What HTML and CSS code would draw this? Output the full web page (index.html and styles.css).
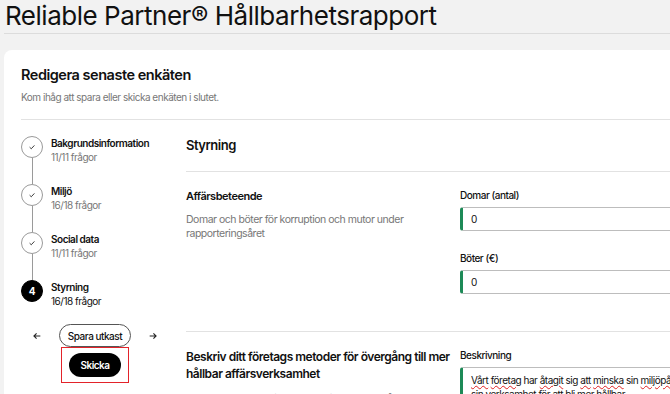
FILE: index.html
```html
<!DOCTYPE html>
<html lang="sv">
<head>
<meta charset="utf-8">
<title>Reliable Partner® Hållbarhetsrapport</title>
<link rel="stylesheet" href="styles.css">
</head>
<body>
<header class="page-header">
  <h1 class="page-title">Reliable Partner® Hållbarhetsrapport</h1>
</header>
<main class="card">
  <div class="card-head">
    <h2 class="card-title">Redigera senaste enkäten</h2>
    <p class="card-sub">Kom ihåg att spara eller skicka enkäten i slutet.</p>
  </div>
  <div class="card-body">
    <aside class="side">
      <ol class="steps">
        <li class="step done">
          <span class="step-dot"><svg viewBox="0 0 10 10" width="8" height="8"><path d="M2 5.2 L4.1 7.2 L8 3" fill="none" stroke="#222" stroke-width="1.1"/></svg></span>
          <div class="step-text"><span class="step-name">Bakgrundsinformation</span><span class="step-count">11/11 frågor</span></div>
        </li>
        <li class="step done">
          <span class="step-dot"><svg viewBox="0 0 10 10" width="8" height="8"><path d="M2 5.2 L4.1 7.2 L8 3" fill="none" stroke="#222" stroke-width="1.1"/></svg></span>
          <div class="step-text"><span class="step-name">Miljö</span><span class="step-count">16/18 frågor</span></div>
        </li>
        <li class="step done">
          <span class="step-dot"><svg viewBox="0 0 10 10" width="8" height="8"><path d="M2 5.2 L4.1 7.2 L8 3" fill="none" stroke="#222" stroke-width="1.1"/></svg></span>
          <div class="step-text"><span class="step-name">Social data</span><span class="step-count">11/11 frågor</span></div>
        </li>
        <li class="step current">
          <span class="step-dot">4</span>
          <div class="step-text"><span class="step-name">Styrning</span><span class="step-count dark">16/18 frågor</span></div>
        </li>
      </ol>
      <div class="nav-row">
        <button class="arrow" aria-label="Föregående"><svg viewBox="0 0 12 12" width="10" height="10"><path d="M10 6 H2.5 M5.5 2.8 L2.3 6 L5.5 9.2" fill="none" stroke="#222" stroke-width="1.3"/></svg></button>
        <button class="btn-outline">Spara utkast</button>
        <button class="arrow" aria-label="Nästa"><svg viewBox="0 0 12 12" width="10" height="10"><path d="M2 6 H9.5 M6.5 2.8 L9.7 6 L6.5 9.2" fill="none" stroke="#222" stroke-width="1.3"/></svg></button>
      </div>
      <div class="highlight">
        <button class="btn-solid">Skicka</button>
      </div>
    </aside>
    <section class="content">
      <h3 class="section-title">Styrning</h3>
      <div class="q-row">
        <div class="q-info">
          <h4 class="q-title">Affärsbeteende</h4>
          <p class="q-desc">Domar och böter för korruption och mutor under rapporteringsåret</p>
        </div>
        <div class="q-fields">
          <label class="field">
            <span class="field-label">Domar (antal)</span>
            <span class="input">0</span>
          </label>
          <label class="field">
            <span class="field-label">Böter (€)</span>
            <span class="input">0</span>
          </label>
        </div>
      </div>
      <div class="q-row">
        <div class="q-info">
          <h4 class="q-title big">Beskriv ditt företags metoder för övergång till mer hållbar affärsverksamhet</h4>
          <p class="q-desc">Du kan berätta om till exempel dina konkreta åtgärder och planer framåt</p>
        </div>
        <div class="q-fields">
          <label class="field">
            <span class="field-label">Beskrivning</span>
            <span class="input textarea"><span class="sp">Vårt</span> <span class="sp">företag</span> har <span class="sp">åtagit</span> sig <span class="sp">att</span> <span class="sp">minska</span> sin <span class="sp">miljöpåverkan</span> <span class="sp">och</span> <span class="sp">utveckla</span> <span class="sp">sin</span> <span class="sp">verksamhet</span> för att bli mer hållbar.</span>
          </label>
        </div>
      </div>
    </section>
  </div>
</main>
</body>
</html>
```
FILE: styles.css
```css
* { box-sizing: border-box; }
html, body { margin: 0; padding: 0; }
body {
  background: #f2f2f2;
  font-family: Inter, "Noto Sans", sans-serif;
  letter-spacing: -0.03em;
  color: #111;
  width: 670px;
  height: 394px;
  overflow: hidden;
}
button { letter-spacing: inherit; font-family: inherit; }
.page-header {
  margin-left: 4px;
  border-bottom: 1px solid #dcdcdc;
  height: 34px;
  width: 900px;
}
.page-title {
  margin: 0;
  padding-left: 1px;
  font-size: 26px;
  font-weight: 400;
  line-height: 32px;
}
.card {
  margin: 16px 0 0 4px;
  width: 900px;
  background: #fff;
  border-radius: 8px;
  padding: 0 0 40px 17px;
}
.card-head {
  padding-top: 15px;
  padding-bottom: 15px;
  border-bottom: 1px solid #e2e2e2;
}
.card-title {
  margin: 0;
  font-size: 14.5px;
  font-weight: 600;
  line-height: 20px;
}
.card-sub {
  margin: 5px 0 0;
  font-size: 10px;
  line-height: 14px;
  color: #777;
}
.card-body {
  display: flex;
  gap: 17px;
}
.side {
  width: 148px;
  flex: none;
  padding-top: 16px;
  display: flex;
  flex-direction: column;
  align-items: center;
}
.steps {
  list-style: none;
  margin: 0;
  padding: 0;
  align-self: stretch;
}
.step {
  display: flex;
  gap: 8px;
  height: 48px;
  position: relative;
}
.step:not(:last-child)::after {
  content: "";
  position: absolute;
  left: 10.5px;
  top: 22px;
  height: 26px;
  width: 1px;
  background: #9a9a9a;
}
.step:last-child { height: 28px; }
.step-dot {
  width: 22px;
  height: 22px;
  border-radius: 50%;
  border: 1px solid #9a9a9a;
  display: flex;
  align-items: center;
  justify-content: center;
  flex: none;
  background: #fff;
}
.step.current .step-dot {
  background: #000;
  border-color: #000;
  color: #fff;
  font-size: 10px;
  font-weight: 700;
}
.step-text {
  display: flex;
  flex-direction: column;
  font-size: 10px;
  line-height: 14px;
}
.step-name { font-weight: 600; color: #111; }
.step-count { color: #777; }
.step-count.dark { color: #111; }
.nav-row {
  margin-top: 16px;
  display: flex;
  align-items: center;
  gap: 17px;
}
.arrow {
  border: 0;
  background: none;
  padding: 0;
  width: 10px;
  height: 10px;
  display: flex;
}
.btn-outline {
  font-size: 10px;
  font-weight: 500;
  color: #111;
  background: #fff;
  border: 1px solid #555;
  border-radius: 12px;
  height: 23px;
  width: 72px;
  padding: 0;
}
.highlight {
  border: 1.5px solid #e3232a;
  padding: 5px 7px;
}
.btn-solid {
  font-size: 10px;
  font-weight: 600;
  color: #fff;
  background: #000;
  border: 0;
  border-radius: 12px;
  height: 24px;
  width: 52px;
  padding: 0;
  display: block;
}
.content {
  flex: 1;
  padding-top: 16px;
}
.section-title {
  margin: 0;
  font-size: 13px;
  font-weight: 600;
  line-height: 18px;
  padding-bottom: 17px;
  border-bottom: 1px solid #e2e2e2;
}
.q-row {
  display: grid;
  grid-template-columns: 268px 320px;
  column-gap: 6px;
  padding: 16px 0 37px;
  border-bottom: 1px solid #e2e2e2;
}
.q-info { padding-right: 4px; }
.q-title {
  margin: 0;
  font-size: 11px;
  font-weight: 600;
  line-height: 16px;
}
.q-title.big {
  font-size: 12px;
  line-height: 17px;
}
.q-desc {
  margin: 9px 0 0;
  font-size: 10.5px;
  line-height: 14px;
  color: #777;
}
.q-title.big + .q-desc { margin-top: 10px; }
.q-fields {
  display: flex;
  flex-direction: column;
  gap: 20px;
}
.field {
  display: flex;
  flex-direction: column;
  gap: 5px;
}
.field-label {
  font-size: 10px;
  font-weight: 500;
  line-height: 14px;
}
.input {
  display: block;
  height: 24px;
  border: 1px solid #bdbdbd;
  border-left: 3px solid #1d8a57;
  border-radius: 3px;
  padding: 0 8px;
  font-size: 10px;
  line-height: 22px;
  color: #111;
}
.input.textarea {
  height: 60px;
  line-height: 14px;
  padding-top: 5px;
}
.sp {
  text-decoration: underline wavy #e02020;
  text-decoration-thickness: 1px;
  text-underline-offset: 1px;
}
```
